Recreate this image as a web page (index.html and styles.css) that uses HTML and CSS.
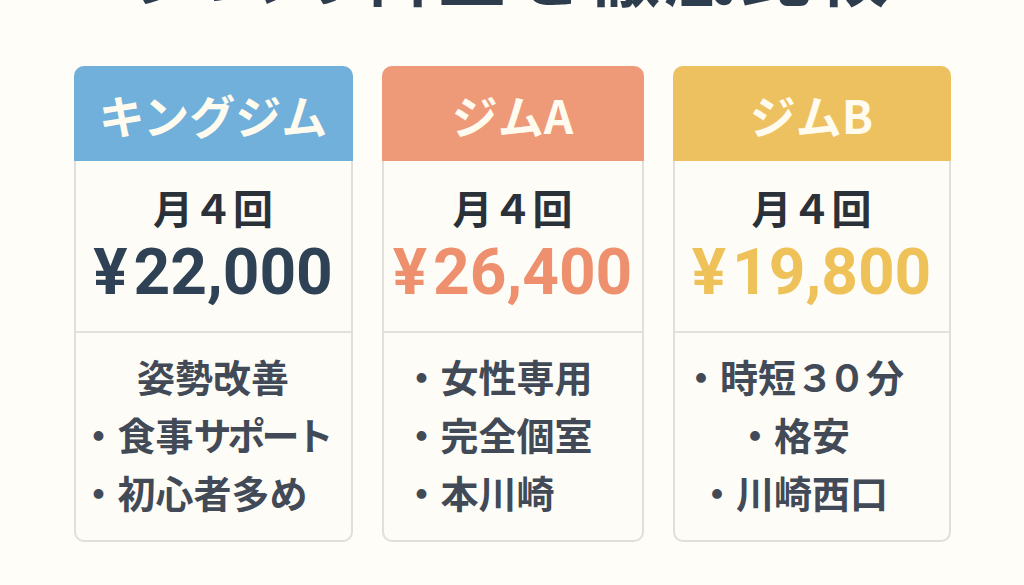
FILE: index.html
```html
<!DOCTYPE html>
<html lang="ja">
<head>
<meta charset="utf-8">
<title>ジム料金比較</title>
<link rel="stylesheet" href="styles.css">
</head>
<body>
<div class="page">
  <h1 class="title">ジムの料金を徹底比較</h1>
  <div class="cards">
    <section class="card card-blue">
      <div class="card-head">キングジム</div>
      <div class="card-price">
        <div class="freq">月４回</div>
        <div class="price"><span class="yen">¥</span>22,000</div>
      </div>
      <div class="card-feat feat-blue">
        <div class="feat-lead">姿勢改善</div>
        <div>・食事<span class="kana">サポート</span></div>
        <div>・初心者多め</div>
      </div>
    </section>
    <section class="card card-orange">
      <div class="card-head">ジムA</div>
      <div class="card-price">
        <div class="freq">月４回</div>
        <div class="price"><span class="yen">¥</span>26,400</div>
      </div>
      <div class="card-feat feat-orange">
        <div>・女性専用</div>
        <div>・完全個室</div>
        <div>・本川崎</div>
      </div>
    </section>
    <section class="card card-yellow">
      <div class="card-head">ジムB</div>
      <div class="card-price">
        <div class="freq">月４回</div>
        <div class="price"><span class="yen">¥</span>19,800</div>
      </div>
      <div class="card-feat feat-yellow">
        <div>・時短<span class="num">３０</span>分</div>
        <div>・格安</div>
        <div>・川崎西口</div>
      </div>
    </section>
  </div>
</div>
</body>
</html>
```

FILE: styles.css
```css
html, body {
  margin: 0;
  padding: 0;
  background: #fefdf8;
}
body {
  width: 1024px;
  height: 585px;
  overflow: hidden;
  font-family: "Noto Sans CJK JP", "Noto Sans", sans-serif;
  color: #2e3d4e;
}
.page {
  display: flex;
  flex-direction: column;
  align-items: center;
}
.title {
  margin: -67px 0 0 0;
  font-size: 72px;
  line-height: 72px;
  height: 72px;
  font-weight: 700;
  letter-spacing: 4px;
  color: #2e3d4e;
  white-space: nowrap;
}
.cards {
  margin-top: 61px;
  display: grid;
  grid-template-columns: 279px 262px 278px;
  column-gap: 29px;
}
.card {
  display: flex;
  flex-direction: column;
  border: 2px solid #e2dfda;
  border-top: none;
  border-radius: 10px;
  background: #fdfcf7;
  height: 476px;
  box-sizing: border-box;
}
.card-head {
  height: 95px;
  margin: 0 -2px;
  border-radius: 10px 10px 0 0;
  display: flex;
  align-items: center;
  justify-content: center;
  font-size: 46px;
  font-weight: 700;
  color: #fffbef;
}
.card-blue .card-head { background: #70b0db; }
.card-orange .card-head { background: #ee9978; }
.card-yellow .card-head { background: #eec160; }

.card-price {
  height: 170px;
  box-sizing: border-box;
  padding-top: 22px;
  display: flex;
  flex-direction: column;
  align-items: center;
  gap: 6px;
}
.freq {
  font-size: 40px;
  line-height: 48px;
  font-weight: 700;
  color: #2b3139;
}
.price {
  font-family: Roboto, "Liberation Sans", sans-serif;
  font-size: 64px;
  line-height: 72px;
  font-weight: 700;
  color: #2e4155;
}
.yen {
  margin-right: 6px;
}
.card-orange .price { color: #ee906e; }
.card-yellow .price { color: #eec159; }

.card-feat {
  flex: 1;
  border-top: 2px solid #e4e1dc;
  padding-top: 14px;
  font-size: 38px;
  line-height: 58px;
  font-weight: 700;
  color: #414a56;
  white-space: nowrap;
}
.kana {
  letter-spacing: -4px;
}
.num {
  letter-spacing: -6px;
  margin-right: 6px;
}
.feat-blue {
  padding-left: 4px;
}
.feat-blue .feat-lead {
  margin-left: -4px;
  text-align: center;
}
.feat-orange {
  padding-left: 19px;
}
.feat-yellow {
  text-align: center;
  padding-right: 37px;
}
```
